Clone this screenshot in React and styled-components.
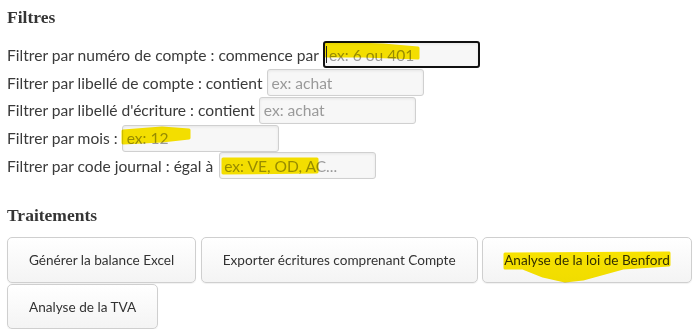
import React from "react";
import styled, { createGlobalStyle } from "styled-components";

const GlobalStyle = createGlobalStyle`
    html, body {
        margin: 0;
        padding: 0;
        background: #ffffff;
    }
    body {
        font-family: Lato, "Open Sans", sans-serif;
        color: #333333;
    }
`;

const Page = styled.div`
    padding: 7px 7px 0 7px;
`;

const Title = styled.h3`
    margin: 0;
    height: 20px;
    line-height: 20px;
    font-family: "Liberation Serif", serif;
    font-weight: bold;
    font-size: 17.5px;
    color: #353535;
    margin-top: ${(p) => p.top || 0}px;
`;

const FilterList = styled.div`
    margin-top: 14px;
    display: flex;
    flex-direction: column;
`;

const FilterRow = styled.div`
    display: flex;
    align-items: center;
    height: 27.75px;
    font-size: 15.6px;
    color: #3a3a3a;
    white-space: nowrap;
`;

const Field = styled.span`
    position: relative;
    display: inline-flex;
    margin-left: ${(p) => p.gap || 4}px;
`;

const Input = styled.input`
    box-sizing: border-box;
    width: 157px;
    height: 27px;
    padding: 0 4px;
    font-family: Lato, "Open Sans", sans-serif;
    font-size: 15.6px;
    color: #333;
    background: #f7f7f7;
    border: ${(p) => (p.focused ? "2px solid #111" : "1px solid #d0d0d0")};
    border-radius: 3px;
    box-shadow: inset 0 1px 3px rgba(0, 0, 0, 0.07);
    outline: none;
    &::placeholder {
        color: #9a9a9a;
    }
`;

const Caret = styled.span`
    position: absolute;
    left: 3px;
    top: 5px;
    width: 1px;
    height: 17px;
    background: #222;
`;

const Marker = styled.svg`
    position: absolute;
    left: 0;
    top: 0;
    overflow: visible;
    pointer-events: none;
    mix-blend-mode: multiply;
`;

const ButtonBar = styled.div`
    margin-top: 12.5px;
    display: flex;
    flex-wrap: wrap;
    column-gap: 4.5px;
    row-gap: 1px;
    width: 691px;
`;

const ActionButton = styled.button`
    position: relative;
    box-sizing: border-box;
    height: 45.5px;
    padding: 0 21px;
    font-family: Lato, "Open Sans", sans-serif;
    font-size: 13.6px;
    color: #333;
    background: linear-gradient(#ffffff, #f4f4f4);
    border: 1px solid #cfcfcf;
    border-radius: 5px;
    box-shadow: 0 1px 1px rgba(0, 0, 0, 0.06);
    white-space: nowrap;
    cursor: pointer;
`;

const Highlight = ({ d }) => (
    <Marker width="1" height="1">
        <path d={d} fill="#fbe600" stroke="#fbe600" strokeWidth="3" strokeLinejoin="round" />
    </Marker>
);

const filters = [
    { label: "Filtrer par numéro de compte : commence par", placeholder: "ex: 6 ou 401", focused: true,
      mark: "M3 2 L60 4 L95 7 L95 17 L40 15 L3 15 Z" },
    { label: "Filtrer par libellé de compte : contient", placeholder: "ex: achat" },
    { label: "Filtrer par libellé d'écriture : contient", placeholder: "ex: achat" },
    { label: "Filtrer par mois :", placeholder: "ex: 12",
      mark: "M1 6 L40 3 L67 5 L67 13 L40 16 L1 18 Z" },
    { label: "Filtrer par code journal : égal à", placeholder: "ex: VE, OD, AC...", gap: 6,
      mark: "M4 7 L98 7 L98 20 L4 21 Z" },
];

const actions = [
    { label: "Générer la balance Excel" },
    { label: "Exporter écritures comprenant Compte" },
    { label: "Analyse de la loi de Benford",
      mark: "M22 16 L186 15 L186 27 L140 30 L100 41 L82 43 L60 38 L40 30 L22 30 Z" },
    { label: "Analyse de la TVA" },
];

const App = () => {
    return (
        <Page>
            <GlobalStyle />
            <Title>Filtres</Title>
            <FilterList>
                {filters.map((f) => (
                    <FilterRow key={f.label}>
                        {f.label}
                        <Field gap={f.gap}>
                            <Input placeholder={f.placeholder} focused={f.focused ? 1 : 0} readOnly />
                            {f.mark && <Highlight d={f.mark} />}
                            {f.focused && <Caret />}
                        </Field>
                    </FilterRow>
                ))}
            </FilterList>
            <Title top={25}>Traitements</Title>
            <ButtonBar>
                {actions.map((a) => (
                    <ActionButton key={a.label}>
                        {a.label}
                        {a.mark && <Highlight d={a.mark} />}
                    </ActionButton>
                ))}
            </ButtonBar>
        </Page>
    );
};

export default App;
